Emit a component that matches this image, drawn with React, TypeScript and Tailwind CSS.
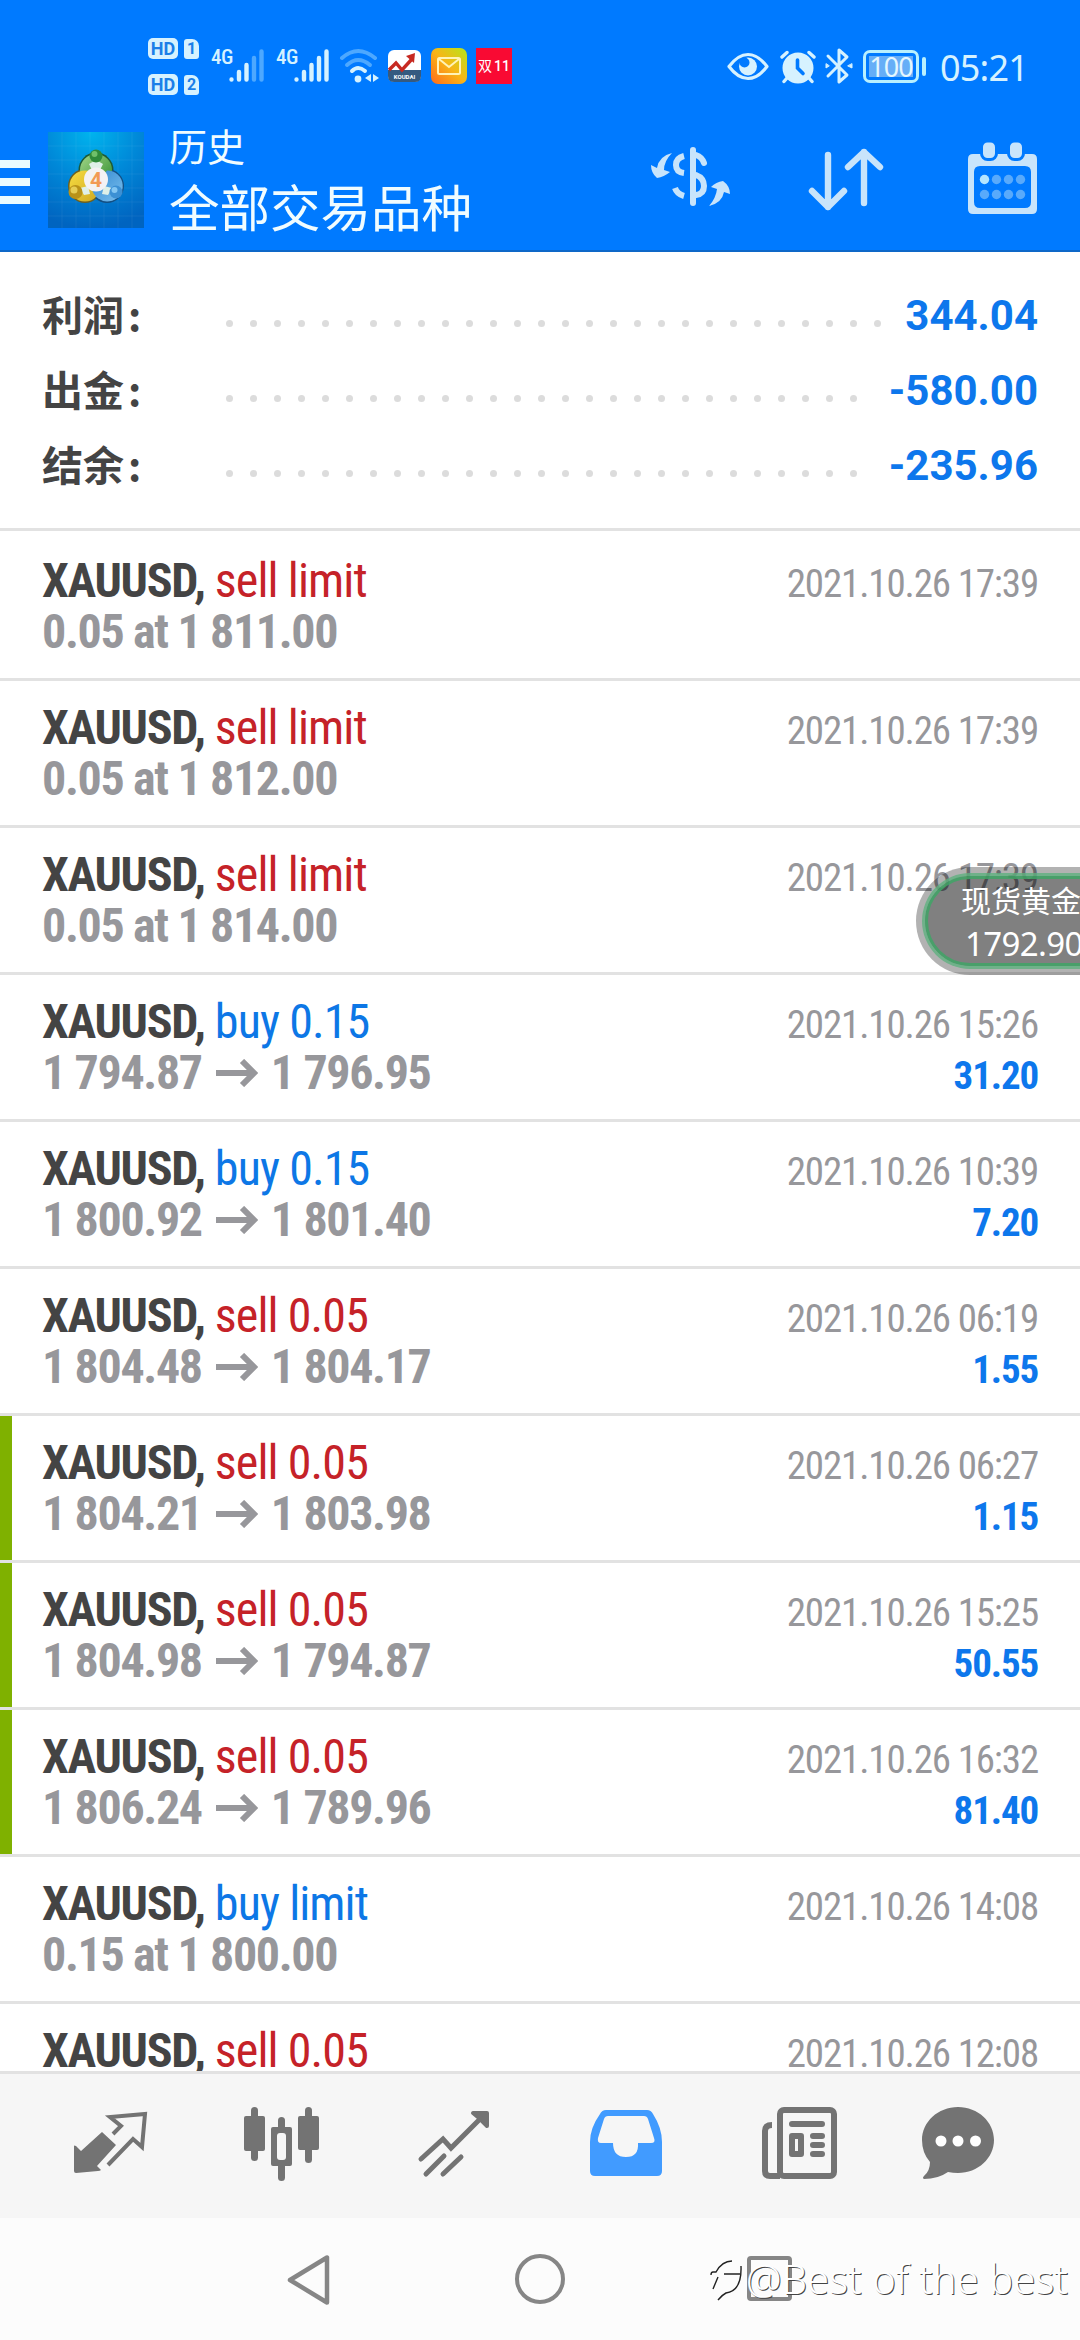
import type { ReactNode } from 'react';

const SUMMARY = [
  { label: '利润', value: '344.04', dots: 28 },
  { label: '出金', value: '-580.00', dots: 27 },
  { label: '结余', value: '-235.96', dots: 27 },
];

type Deal = { kind: string; side: 'buy' | 'sell'; time: string; note?: string; from?: string; to?: string; profit?: string; marked?: boolean };

const DEALS: Deal[] = [
  { kind: 'sell limit', side: 'sell', time: '2021.10.26 17:39', note: '0.05 at 1 811.00' },
  { kind: 'sell limit', side: 'sell', time: '2021.10.26 17:39', note: '0.05 at 1 812.00' },
  { kind: 'sell limit', side: 'sell', time: '2021.10.26 17:39', note: '0.05 at 1 814.00' },
  { kind: 'buy 0.15', side: 'buy', time: '2021.10.26 15:26', from: '1 794.87', to: '1 796.95', profit: '31.20' },
  { kind: 'buy 0.15', side: 'buy', time: '2021.10.26 10:39', from: '1 800.92', to: '1 801.40', profit: '7.20' },
  { kind: 'sell 0.05', side: 'sell', time: '2021.10.26 06:19', from: '1 804.48', to: '1 804.17', profit: '1.55' },
  { kind: 'sell 0.05', side: 'sell', time: '2021.10.26 06:27', from: '1 804.21', to: '1 803.98', profit: '1.15', marked: true },
  { kind: 'sell 0.05', side: 'sell', time: '2021.10.26 15:25', from: '1 804.98', to: '1 794.87', profit: '50.55', marked: true },
  { kind: 'sell 0.05', side: 'sell', time: '2021.10.26 16:32', from: '1 806.24', to: '1 789.96', profit: '81.40', marked: true },
  { kind: 'buy limit', side: 'buy', time: '2021.10.26 14:08', note: '0.15 at 1 800.00' },
  { kind: 'sell 0.05', side: 'sell', time: '2021.10.26 12:08' },
];

export default function App() {
  return (
    <div className="relative flex h-[2340px] w-[1080px] flex-col overflow-hidden bg-white font-['Roboto','Noto_Sans_CJK_SC',sans-serif]">
      <StatusBar />
      <Header />
      <Summary />
      <main className="min-h-0 flex-1 overflow-hidden pt-[3px]">
        {DEALS.map((deal, i) => (
          <DealRow key={i} deal={deal} />
        ))}
      </main>
      <TabBar />
      <SystemNav />

      {/* Floating quote widget */}
      <div className="absolute left-[916px] top-[867px] h-[108px] w-[240px] rounded-full bg-black/30 p-[6px]">
        <div className="h-full w-full rounded-full border-[3px] border-[#5fb07f]/80 bg-black/28 bg-clip-padding">
          <div className="flex h-full w-full flex-col rounded-full border-[3px] border-[#3fa566]/85 pl-[33px] pt-[2px] text-white">
            <span className="whitespace-nowrap text-[30px] leading-[42px]">现货黄金</span>
            <span className="pl-[4px] font-['Noto_Sans'] text-[33px] leading-[41px] tracking-[-0.6px]">1792.90</span>
          </div>
        </div>
      </div>
    </div>
  );
}

const StatusBar = () => (
  <div className="flex h-[108px] shrink-0 items-start bg-[#007aff] text-[#d6f2ff]">
    <div className="ml-[148px] mt-[38px] flex flex-col gap-[15px]">
      <SimBadge n="1" />
      <SimBadge n="2" />
    </div>
    <Signal weak className="ml-[12px]" />
    <Signal className="ml-[11px]" />

    {/* Wi-Fi */}
    <svg className="ml-[9px] mt-[47px]" width="41" height="37" viewBox="0 0 41 37" fill="none" strokeWidth="4" strokeLinecap="round">
      <path d="M3 11Q19 -3 36 11" stroke="#4da8ff" />
      <path d="M8 18Q19 8 31 18" stroke="#4da8ff" />
      <path d="M13 24Q19 18 26 24" stroke="#d6f2ff" />
      <circle cx="19" cy="32" r="3.400" fill="#d6f2ff" />
      <path d="M32 27V35L26 31ZM34 27V35L40 31Z" fill="#d6f2ff" />
    </svg>

    {/* Notification icons */}
    <svg className="ml-[8px] mt-[50px]" width="33" height="32" viewBox="0 0 33 32">
      <rect width="33" height="32" rx="6" fill="#fff" />
      <path d="M0 20H33V26Q33 32 27 32H6Q0 32 0 26Z" fill="#355a80" />
      <path d="M1 20L8 13L14 20L24 9" fill="none" stroke="#c72a22" strokeWidth="3.400" />
      <path d="M27 3L26 13L18 6Z" fill="#c72a22" />
      <text x="16.500" y="29" fontSize="6" fontWeight="700" textAnchor="middle" fill="#fff">KOUDAI</text>
    </svg>
    <svg className="ml-[10px] mt-[48px]" width="36" height="36" viewBox="0 0 36 36">
      <defs>
        <linearGradient id="mail" x1="0" y1="1" x2="1" y2="0">
          <stop offset="0" stopColor="#ff6a1a" />
          <stop offset="0.5" stopColor="#f8b517" />
          <stop offset="1" stopColor="#b5e61a" />
        </linearGradient>
      </defs>
      <rect width="36" height="36" rx="7" fill="url(#mail)" />
      <rect x="7" y="10" width="22" height="16" rx="1.500" fill="none" stroke="#fff3b8" strokeWidth="2" />
      <path d="M8 11L18 19L28 11" fill="none" stroke="#fff3b8" strokeWidth="2" />
    </svg>
    <div className="ml-[9px] mt-[48px] flex h-[36px] w-[36px] items-center justify-center bg-[#f90a33] text-[14px] text-white">
      双<span className="ml-[2px] font-medium">11</span>
    </div>

    {/* Right side */}
    <svg className="ml-[215px] mt-[52px]" width="42" height="29" viewBox="0 0 42 29" fill="none">
      <path d="M2 14.500Q11 2.500 21 2.500T40 14.500Q31 26.500 21 26.500T2 14.500Z" stroke="#d6f2ff" strokeWidth="3.200" strokeLinejoin="round" />
      <circle cx="21" cy="14.500" r="9" fill="#d6f2ff" />
      <circle cx="17.500" cy="10.500" r="5" fill="#007aff" />
    </svg>
    <svg className="ml-[11px] mt-[49px]" width="36" height="35" viewBox="0 0 36 35" fill="none" stroke="#d6f2ff" strokeWidth="3.400" strokeLinecap="round">
      <circle cx="18" cy="19" r="14.500" fill="#d6f2ff" strokeWidth="2" />
      <path d="M2 8L7 3.500M34 8L29 3.500M7 29L4 32.500M29 29L32 32.500" />
      <path d="M17.500 11V19L23 24.500" stroke="#007aff" strokeWidth="3.600" />
    </svg>
    <svg className="ml-[9px] mt-[47px]" width="28" height="38" viewBox="0 0 28 38" fill="none" stroke="#d6f2ff" strokeWidth="3" strokeLinejoin="round" strokeLinecap="round">
      <path d="M3 9L22 28L14 35V3L22 10L3 29" />
      <path d="M1 17V21L4 19ZM27 17V21L23 19Z" fill="#d6f2ff" strokeWidth="1" />
    </svg>
    <div className="ml-[10px] mt-[50px] flex h-[33px] w-[56px] items-center justify-center rounded-[7px] border-[3px] border-[#b8f0ff]">
      <span className="flex h-[21px] w-[44px] items-center justify-center bg-[#66aef7] font-['Noto_Sans'] text-[27px] leading-none tracking-[-1px] text-[#e4f7ff]">100</span>
    </div>
    <span className="ml-[3px] mt-[57px] h-[19px] w-[4px] rounded-[2px] bg-[#b8f0ff]" />
    <span className="ml-[14px] mt-[43px] font-['Noto_Sans'] text-[36px] leading-[50px] tracking-[-0.8px] text-[#d6f2ff]">05:21</span>
  </div>
);

const SimBadge = ({ n }: { n: string }) => (
  <div className="flex h-[21px] items-center gap-[6px] font-bold text-[#1b7fe8]">
    <span className="flex h-[21px] w-[30px] items-center justify-center rounded-[5px] bg-[#d6f2ff] text-[18px] leading-none">HD</span>
    <span className="flex h-[20px] w-[15px] items-center justify-center rounded-[3px] rounded-tr-[7px] bg-[#d6f2ff] text-[16px] leading-none">{n}</span>
  </div>
);

const Signal = ({ weak, className }: { weak?: boolean; className?: string }) => (
  <div className={`flex items-start ${className ?? ''}`}>
    <span className="mt-[46px] w-[18px] whitespace-nowrap text-[21px] font-medium leading-[22px] tracking-[-0.5px] [font-stretch:75%]">4G</span>
    <svg className="mt-[48px]" width="36" height="35" viewBox="0 0 36 35" strokeWidth="4.400" strokeLinecap="round" stroke="#d6f2ff">
      <path d="M2.500 31.500V31.500M10 31.500V24M17.500 31.500V17" />
      <path d="M25 31.500V10M32.500 31.500V3.500" stroke={weak ? '#4da8ff' : '#d6f2ff'} />
    </svg>
  </div>
);

const Header = () => (
  <header className="flex h-[144px] shrink-0 items-start border-b-2 border-[#0e68c8] bg-[#007aff]">
    <div className="mt-[52px] flex w-[30px] flex-col gap-[10px]">
      <i className="h-[8px] bg-[#e9fbff]" />
      <i className="h-[8px] bg-[#e9fbff]" />
      <i className="h-[8px] bg-[#e9fbff]" />
    </div>
    <Logo />
    <div className="ml-[25px] mt-[15px] flex w-[480px] flex-col text-[#f0fcff]">
      <span className="text-[38px] leading-[50px]">历史</span>
      <span className="mt-[6px] text-[50.500px] leading-[62px]">全部交易品种</span>
    </div>

    {/* Toolbar */}
    <svg className="ml-[2px] mt-[38px]" width="80" height="64" viewBox="0 0 80 64" fill="none" stroke="#c8e4fb" strokeWidth="6">
      <path d="M42 4V57" strokeLinecap="round" />
      <path d="M33 10Q25 12 25 19T33 27M24 42Q26 48 33 50" />
      <path d="M45 9Q51 11 53 17M45 29Q53 32 53 40T45 49" strokeLinecap="round" />
      <path d="M21 7Q8 10 6 22L0 19Q0 27 6 32Q13 31 19 26L13 24Q13 15 21 7Z" fill="#c8e4fb" stroke="none" />
      <path d="M58 60Q71 57 73 46L79 48Q79 40 72 35Q65 36 60 41L66 43Q65 52 58 60Z" fill="#c8e4fb" stroke="none" />
    </svg>
    <svg className="ml-[77px] mt-[38px]" width="76" height="66" viewBox="0 0 76 66" fill="none" stroke="#c8e4fb" strokeWidth="6.400" strokeLinecap="round" strokeLinejoin="round">
      <path d="M20 9V61M4 45L20 61L36 45M56 57V6M40 21L56 6L72 21" />
    </svg>
    <svg className="ml-[84px] mt-[34px]" width="70" height="72" viewBox="0 0 70 72">
      <path fillRule="evenodd" d="M5 12H64Q69 12 69 17V67Q69 72 64 72H5Q0 72 0 67V17Q0 12 5 12ZM12 24Q6 24 6 30V60Q6 66 12 66H57Q63 66 63 60V30Q63 24 57 24Z" fill="#c8e4fb" />
      <rect x="13.500" y="-1" width="15" height="18.500" rx="6" fill="#c8e4fb" stroke="#007aff" strokeWidth="3" />
      <rect x="40.500" y="-1" width="15" height="18.500" rx="6" fill="#c8e4fb" stroke="#007aff" strokeWidth="3" />
      {[16.5, 28.5, 40.5, 52.5].map((x, i) => (
        <g key={x} fill="#59aafb">
          <circle cx={x} cy="37.500" r="4.700" fill={i === 0 ? '#b5e6ff' : '#59aafb'} />
          <circle cx={x} cy="52.500" r="4.700" />
        </g>
      ))}
    </svg>
  </header>
);

const Logo = () => (
  <svg className="ml-[18px] mt-[24px] shrink-0" width="96" height="96" viewBox="0 0 96 96">
    <defs>
      <radialGradient id="sky" cx="0.45" cy="0" r="1">
        <stop offset="0" stopColor="#00b4ee" />
        <stop offset="0.5" stopColor="#0088d8" />
        <stop offset="1" stopColor="#0064c0" />
      </radialGradient>
      <linearGradient id="green" x1="0" y1="0" x2="1" y2="1">
        <stop offset="0" stopColor="#a5d88a" />
        <stop offset="1" stopColor="#2c8a2c" />
      </linearGradient>
      <linearGradient id="gold" x1="0" y1="0" x2="1" y2="1">
        <stop offset="0" stopColor="#f6dc42" />
        <stop offset="1" stopColor="#d0a820" />
      </linearGradient>
      <linearGradient id="aqua" x1="0" y1="0" x2="1" y2="1">
        <stop offset="0" stopColor="#2f86cf" />
        <stop offset="1" stopColor="#7cc0ee" />
      </linearGradient>
    </defs>
    <rect width="96" height="96" fill="url(#sky)" />
    <path d="M14 0V96M28 0V96M42 0V96M56 0V96M70 0V96M84 0V96M0 14H96M0 28H96M0 42H96M0 56H96M0 70H96M0 84H96" stroke="#fff" strokeOpacity="0.060" />
    {/* Three rings around the coin */}
    <circle cx="48" cy="38" r="17.500" fill="#1d5a35" />
    <circle cx="37" cy="54" r="17" fill="#6d6020" />
    <circle cx="59" cy="54" r="17" fill="#134f83" />
    <circle cx="48" cy="38" r="16" fill="url(#green)" />
    <circle cx="37" cy="54" r="15.500" fill="url(#gold)" />
    <path d="M59 38.500A15.500 15.500 0 1 1 44 57Z" fill="url(#aqua)" />
    <path d="M41 32L48 28L55 32L52 38H44ZM32 56L40 54L42 62L36 63ZM64 56L56 54L54 62L60 63Z" fill="#dff0e8" />
    <circle cx="48" cy="24" r="6.500" fill="#2f8a3a" />
    <circle cx="46.500" cy="22" r="3" fill="#6fbf6a" />
    <circle cx="27.500" cy="60" r="7" fill="#b99218" />
    <circle cx="26" cy="58" r="3.500" fill="#e6cd55" />
    <circle cx="68" cy="60" r="6.500" fill="#3c90d4" />
    <circle cx="66.500" cy="58" r="3" fill="#84c6f2" />
    <circle cx="48" cy="47.500" r="12" fill="#f4f2f4" />
    <text x="48" y="55" fontSize="21" fontWeight="700" textAnchor="middle" fill="#f29a55">4</text>
  </svg>
);

const Summary = () => (
  <section className="h-[279px] shrink-0 border-b-[3px] border-[#e2e2e2] px-[42px] pt-[26px]">
    {SUMMARY.map((row) => (
      <div key={row.label} className="flex h-[75px] items-center justify-between">
        <div className="flex items-center">
          <span className="-mt-[6px] w-[184px] font-['Noto_Sans_CJK_SC'] text-[41px] font-bold leading-[60px] text-[#444]">
            {row.label}
            <span className="ml-[4px]">:</span>
          </span>
          <div className="mt-[15px] flex gap-[17px]">
            {Array.from({ length: row.dots }, (_, i) => (
              <i key={i} className="h-[7px] w-[7px] rounded-full bg-[#dcdcdc]" />
            ))}
          </div>
        </div>
        <span className="text-[42px] font-bold text-[#0d77ec]">{row.value}</span>
      </div>
    ))}
  </section>
);

const DealRow = ({ deal }: { deal: Deal }) => (
  <div className="relative flex h-[147px] justify-between border-b-[3px] border-[#e2e2e2] px-[42px] pt-[21px] font-['Roboto_Condensed','Roboto'] [font-stretch:75%]">
    {deal.marked && <i className="absolute inset-y-0 left-0 w-[12px] bg-[#7fb100]" />}
    <div className="whitespace-nowrap text-[48px] leading-[51px]">
      <div className="tracking-[-0.9px] text-[#444]">
        <b className="tracking-[-1.3px]">XAUUSD,</b>{' '}
        <span className={deal.side === 'buy' ? 'text-[#0d77e6]' : 'text-[#c52228]'}>{deal.kind}</span>
      </div>
      <div className="flex items-center font-bold tracking-[-1.35px] text-[#97979b]">
        {deal.note}
        {deal.from && (
          <>
            {deal.from}
            <Arrow />
            {deal.to}
          </>
        )}
      </div>
    </div>
    <div className="whitespace-nowrap pt-[4px] text-right text-[39px] leading-[51px] tracking-[-1.15px]">
      <div className="text-[#97979b]">{deal.time}</div>
      {deal.profit && <b className="text-[#0d77ec]">{deal.profit}</b>}
    </div>
  </div>
);

const Arrow = () => (
  <svg className="ml-[14px] mr-[13px]" width="42" height="28" viewBox="0 0 42 28" fill="none" stroke="#97979b" strokeWidth="6">
    <path d="M0 14H37M26 2L38 14L26 26" />
  </svg>
);

const TabBar = () => (
  <nav className="relative h-[147px] shrink-0 border-t-[3px] border-[#e2e2e2] bg-[#f6f6f6]">
    <div className="flex h-[144px] pl-[74px] pt-[34px]">
      <TabIcon className="w-[170px]" width={73}>
        <path d="M28 24L42 37L23 58L27 62Q26 63 24 63L2 65Q0 65 0 63V38Q0 37 2 38L7 43Z" fill="#737373" />
        <path d="M39 26L47 18L36 9L71 6L68 39L59 31L34 57" fill="none" stroke="#737373" strokeWidth="4" />
      </TabIcon>
      <TabIcon className="w-[174px]" width={76}>
        <g fill="#737373">
          <rect x="7" y="-1" width="7" height="54" rx="3.500" />
          <rect x="0" y="8" width="21" height="35" rx="2" />
          <rect x="61" y="-1" width="7" height="56" rx="3.500" />
          <rect x="54" y="8" width="21" height="34" rx="2" />
          <rect x="34" y="9" width="7" height="64" rx="3.500" />
          <rect x="27" y="19" width="21" height="39" rx="2" />
        </g>
        <rect x="33" y="25" width="9" height="27" rx="3" fill="#f6f6f6" />
      </TabIcon>
      <TabIcon className="w-[172px]" width={73}>
        <path d="M3 51L25 31L33 40L65 8M8 66L26 48M25 66L43 49" fill="none" stroke="#737373" strokeWidth="5" strokeLinecap="round" />
        <path d="M55 5H69V18L64 13V10H61Z" fill="#737373" stroke="#737373" strokeWidth="4" strokeLinejoin="round" />
      </TabIcon>
      <TabIcon className="w-[172px]" width={73}>
        <path fillRule="evenodd" d="M16 2H57Q61 2 63 6Q72 20 72 34V63Q72 68 67 68H5Q0 68 0 63V34Q0 20 10 6Q12 2 16 2ZM18 8Q15 8 14 11L8 30Q7 35 11 35H23Q23 49 36 49T48 35H61Q66 35 64 30L58 11Q57 8 54 8Z" fill="#419bff" />
      </TabIcon>
      <TabIcon className="w-[160px]" width={76}>
        <rect x="18" y="2" width="54" height="66" rx="4" fill="none" stroke="#737373" strokeWidth="6" />
        <path d="M10 17Q3 17 3 23V63Q3 68 8 68H18" fill="none" stroke="#737373" strokeWidth="6" />
        <path d="M30 16H60M51 28H60M51 37H60M51 46H60" stroke="#737373" strokeWidth="6" strokeLinecap="round" />
        <rect x="30" y="28" width="9" height="18" fill="none" stroke="#737373" strokeWidth="6" strokeLinejoin="round" />
      </TabIcon>
      <TabIcon width={73}>
        <path d="M36-1C56-1 72 14 72 32S56 65 36 65Q31 65 26 64Q16 71 2 71Q0 70 2 68Q8 63 8 54Q0 45 0 32C0 14 16-1 36-1Z" fill="#737373" />
        <g fill="#fff">
          <circle cx="19" cy="33" r="5.500" />
          <circle cx="36" cy="33" r="5.500" />
          <circle cx="53.500" cy="33" r="5.500" />
        </g>
      </TabIcon>
    </div>
  </nav>
);

const TabIcon = ({ children, width, className }: { children: ReactNode; width: number; className?: string }) => (
  <div className={`shrink-0 ${className ?? ''}`}>
    <svg width={width} height="74" viewBox={`0 0 ${width} 74`} className="overflow-visible">
      {children}
    </svg>
  </div>
);

const SystemNav = () => (
  <footer className="relative h-[122px] shrink-0 bg-[#fcfcfc]">
    <div className="flex items-start pl-[287px] pt-[36px]">
      <svg width="44" height="52" viewBox="0 0 44 52" fill="none" stroke="#868686" strokeWidth="4.500" strokeLinejoin="round">
        <path d="M40 3.500V48.500L3 26Z" />
      </svg>
      <i className="ml-[184px] h-[50px] w-[50px] rounded-full border-[4.500px] border-[#868686]" />
      <i className="ml-[182px] mt-[2px] h-[45px] w-[45px] rounded-[4px] border-[4.500px] border-[#868686]" />
    </div>

    {/* Signature over the nav keys */}
    <div className="absolute left-[710px] top-[35px] flex items-center">
      <svg width="34" height="52" viewBox="0 0 34 52" fill="none" className="overflow-visible">
        <path d="M1 22Q1 19 3 19H6Q12 8 22 8M3 36L8 24M14 21H30M31 13Q32 38 16 40Q12 42 8 47" stroke="#222" strokeWidth="1.400" />
      </svg>
      <span className="ml-[2px] whitespace-nowrap font-['Noto_Sans'] text-[40px] font-light leading-[52px] tracking-[0.1px] text-white [text-shadow:1px_1px_0_#444]">@Best of the best</span>
    </div>
  </footer>
);
